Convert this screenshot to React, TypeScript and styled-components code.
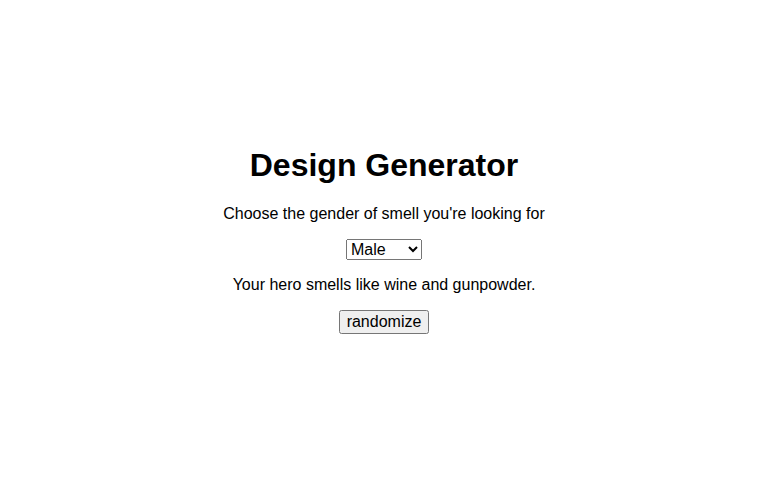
import React, { useState } from "react";
import styled, { createGlobalStyle } from "styled-components";

const Global = createGlobalStyle`
  html, body { margin: 0; padding: 0; background: #fff; }
  body { font-family: "Liberation Sans", Arial, sans-serif; color: #000; }
`;

const Page = styled.div`
  min-height: 100vh;
  box-sizing: border-box;
  padding-bottom: 20px;
  display: flex;
  align-items: center;
  justify-content: center;
`;

const Panel = styled.div`
  text-align: center;
  font-size: 16px;
`;

const Title = styled.h1`
  font-size: 32px;
  font-weight: bold;
  margin: 21.44px 0;
`;

const Text = styled.p`
  margin: 16px 0;
`;

const Select = styled.select`
  font-family: "Liberation Sans", Arial, sans-serif;
  font-size: 16px;
`;

const Button = styled.button`
  font-family: "Liberation Sans", Arial, sans-serif;
  font-size: 16px;
`;

const smells = ["wine and gunpowder", "leather and cedar", "rain and smoke"];

export default function App() {
  const [gender, setGender] = useState("Male");
  const [i, setI] = useState(0);
  return (
    <>
      <Global />
      <Page>
        <Panel>
          <Title>Design Generator</Title>
          <Text>Choose the gender of smell you're looking for</Text>
          <div>
            <Select value={gender} onChange={(e) => setGender(e.target.value)}>
              <option>Male</option>
              <option>Female</option>
            </Select>
          </div>
          <Text>Your hero smells like {smells[i]}.</Text>
          <div>
            <Button onClick={() => setI((i + 1) % smells.length)}>randomize</Button>
          </div>
        </Panel>
      </Page>
    </>
  );
}
